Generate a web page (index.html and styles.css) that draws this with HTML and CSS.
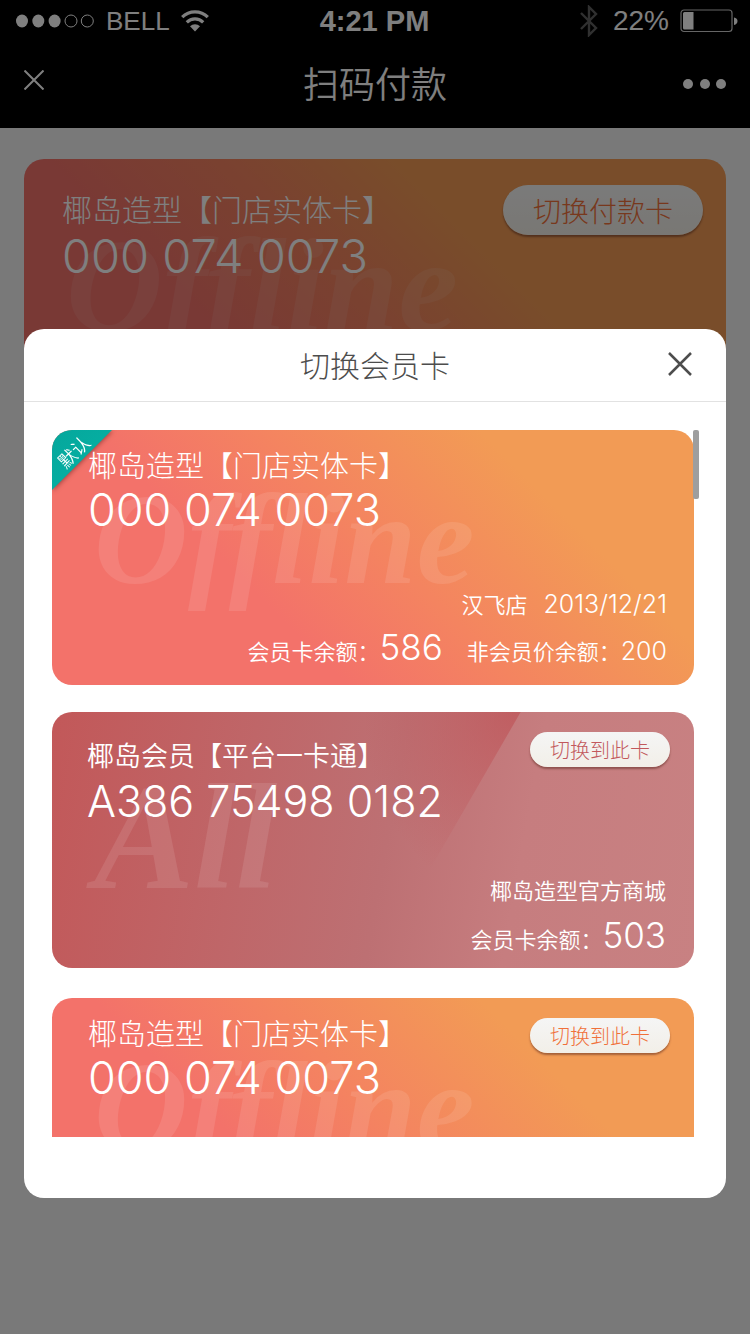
FILE: index.html
```
<!DOCTYPE html>
<html lang="zh-CN">
<head>
<meta charset="utf-8">
<meta name="viewport" content="width=device-width, initial-scale=1">
<title>扫码付款</title>
<link rel="stylesheet" href="styles.css">
</head>
<body>
<div class="page">
  <header class="topbar">
    <div class="status">
      <div class="status-side">
        <svg class="signal" width="80" height="14" viewBox="0 0 80 14" fill="#fff" aria-hidden="true">
          <ellipse cx="7" cy="7" rx="6" ry="6.5"/><ellipse cx="23.3" cy="7" rx="6" ry="6.5"/><ellipse cx="39.6" cy="7" rx="6" ry="6.5"/>
          <g fill="none" stroke="#fff"><circle cx="56" cy="7" r="6"/><circle cx="72.3" cy="7" r="6"/></g>
        </svg>
        <span class="carrier">BELL</span>
        <svg width="28" height="22" viewBox="0 0 28 22" aria-hidden="true">
          <g fill="none" stroke="#fff" stroke-width="3.2"><path d="M1.2 7.2a18 18 0 0 1 25.600 0"/><path d="M5.800 12.300a11.600 11.600 0 0 1 16.400 0"/></g>
          <path d="M14 21.500l-5-5.200a7.200 7.200 0 0 1 10 0z" fill="#fff"/>
        </svg>
      </div>
      <span class="time">4:21 PM</span>
      <div class="status-side status-right">
        <svg width="18" height="32" viewBox="0 0 18 32" fill="none" stroke="#606060" stroke-width="2.400" aria-hidden="true"><path d="M1 8l15 15-7 7V2l7 7L1 24"/></svg>
        <span class="percent">22%</span>
        <svg width="58" height="24" viewBox="0 0 58 24" aria-hidden="true">
          <rect x="1" y="1" width="51" height="21.500" rx="3" fill="none" stroke="#ccc" stroke-width="1.200"/>
          <path d="M4.500 3H13.500V20.500H4.500Q3 20.500 3 19V4.500Q3 3 4.500 3zM54 8.500Q57.500 9 57.500 12T54 16z" fill="#fff"/>
        </svg>
      </div>
    </div>
    <nav class="nav">
      <button class="nav-btn" aria-label="关闭"><svg width="20" height="20" viewBox="0 0 20 20" stroke="#fff" stroke-width="2"><path d="M.5.5l19 19M19.500.5l-19 19"/></svg></button>
      <h1 class="nav-title">扫码付款</h1>
      <button class="nav-btn nav-more" aria-label="更多"><svg width="44" height="12" viewBox="0 0 44 12" fill="#fff"><circle cx="6" cy="6" r="5"/><circle cx="23" cy="6" r="5"/><circle cx="39" cy="6" r="5"/></svg></button>
    </nav>
  </header>
  <main class="content">
    <section class="card card-offline card-current">
      <span class="watermark" aria-hidden="true">Offline</span>
      <div class="card-head">
        <div>
          <h2 class="card-title">椰岛造型【门店实体卡】</h2>
          <p class="card-number">000 074 0073</p>
        </div>
        <button class="pill">切换付款卡</button>
      </div>
    </section>
  </main>
</div>

<div class="overlay">
  <div class="dialog" role="dialog" aria-modal="true" aria-labelledby="dialog-title">
    <header class="dialog-head">
      <h2 class="dialog-title" id="dialog-title">切换会员卡</h2>
      <button class="dialog-close" aria-label="关闭"><svg width="24" height="24" viewBox="0 0 24 24" stroke="#4d4d4d" stroke-width="2.500"><path d="M1 1l22 22M23 1L1 23"/></svg></button>
    </header>
    <div class="list-wrap">
      <div class="list">
        <article class="card card-offline">
          <span class="watermark" aria-hidden="true">Offline</span>
          <div class="ribbon"><div class="ribbon-fill"><span class="ribbon-text">默认</span></div></div>
          <div class="card-head">
            <div>
              <h3 class="card-title">椰岛造型【门店实体卡】</h3>
              <p class="card-number">000 074 0073</p>
            </div>
          </div>
          <div class="card-foot">
            <p class="foot-row"><span>汉飞店</span><span class="date">2013/12/21</span></p>
            <p class="foot-row foot-balance"><span>会员卡余额：<span class="amount">586</span></span><span>非会员价余额：<span class="amount-small">200</span></span></p>
          </div>
        </article>
        <article class="card card-all">
          <span class="watermark" aria-hidden="true">All</span>
          <div class="card-head">
            <div>
              <h3 class="card-title">椰岛会员【平台一卡通】</h3>
              <p class="card-number">A386 75498 0182</p>
            </div>
            <button class="pill">切换到此卡</button>
          </div>
          <div class="card-foot">
            <p class="foot-row">椰岛造型官方商城</p>
            <p class="foot-row foot-balance"><span>会员卡余额：<span class="amount">503</span></span></p>
          </div>
        </article>
        <article class="card card-offline">
          <span class="watermark" aria-hidden="true">Offline</span>
          <div class="card-head">
            <div>
              <h3 class="card-title">椰岛造型【门店实体卡】</h3>
              <p class="card-number">000 074 0073</p>
            </div>
            <button class="pill">切换到此卡</button>
          </div>
        </article>
      </div>
      <div class="scroll-thumb"></div>
    </div>
  </div>
</div>
</body>
</html>
```
FILE: styles.css
```
* { box-sizing: border-box; }

body {
  margin: 0;
  background: #f3f3f3;
  font-family: "Noto Sans CJK SC", sans-serif;
  font-weight: 300;
}

h1, h2, h3, p { margin: 0; font-weight: inherit; }

button {
  padding: 0;
  border: 0;
  background: none;
  font: inherit;
  cursor: pointer;
}

svg { display: block; flex: none; }

.page { min-height: 100vh; }

/* Top bar */
.topbar { height: 128px; background: #000; color: #fff; }

.status {
  display: grid;
  grid-template-columns: 1fr auto 1fr;
  align-items: center;
  height: 42px;
  padding: 0 12px 0 15px;
  font-family: "Liberation Sans", sans-serif;
  font-weight: 400;
}
.status-side { display: flex; align-items: center; gap: 11px; }
.status-right { justify-content: flex-end; }
.carrier { font-size: 26px; line-height: 42px; }
.time { padding-right: 4px; font-size: 29px; font-weight: 700; line-height: 42px; }
.percent { margin-left: 4px; font-size: 28px; line-height: 42px; }

.nav {
  display: grid;
  grid-template-columns: 1fr auto 1fr;
  align-items: center;
  height: 84px;
  padding: 0 24px;
}
.nav-btn { justify-self: start; padding-bottom: 8px; }
.nav-more { justify-self: end; padding-bottom: 0; }
.nav-title { padding-bottom: 4px; font-size: 36px; font-weight: 350; line-height: 52px; }

.content { padding: 31px 24px; }

/* Cards */
.card {
  position: relative;
  display: flex;
  flex-direction: column;
  flex: none;
  justify-content: space-between;
  height: 255px;
  padding: 17px 24px 10px 36px;
  border-radius: 20px;
  overflow: hidden;
  color: #fff;
}
.card-offline {
  background: linear-gradient(45deg, #f3726a 33%, #f48460 52%, #f29b55 76%);
}
.card-all {
  height: 256px;
  padding-bottom: 6px;
  padding-left: 35px;
  background: linear-gradient(100deg, #c25859 0%, #bd7073 52%, #c67d7f 72%, #c88182 100%);
}
.card-all::before {
  content: "";
  position: absolute;
  inset: 0;
  clip-path: polygon(0 0, 73% 0, 50% 100%, 0 100%);
  background: radial-gradient(ellipse 150px 190px at 72% 0, rgba(190, 80, 84, .65), rgba(190, 80, 84, 0));
}
.card-head, .card-foot { position: relative; }
.card-head {
  display: flex;
  justify-content: space-between;
  align-items: flex-start;
}
.card-title { font-size: 29px; line-height: 34px; }
.card-number {
  padding-top: 3px;
  font-family: Inter, sans-serif;
  font-size: 45px;
  line-height: 52px;
}
.card-all .card-title { padding-top: 9px; font-size: 27px; font-weight: 350; }
.card-all .card-number { font-size: 43px; }

.card-current {
  height: 400px;
  padding: 26px 23px 20px 38px;
  background: linear-gradient(45deg, #f3726a 38%, #f48460 55%, #f29b55 70%);
}
.card-current .card-title { padding-top: 6px; font-size: 30px; }
.card-current .card-number { padding-top: 5px; font-size: 47px; }

.watermark {
  position: absolute;
  top: 44px;
  left: 42px;
  font-family: "Brush Script MT", "Liberation Serif", serif;
  font-size: 130px;
  font-style: italic;
  font-weight: 700;
  line-height: 1;
  color: rgba(255, 255, 255, .1);
}
.card-all .watermark { top: 50px; font-size: 150px; }
.card-current .watermark { top: 60px; font-size: 134px; }

.pill {
  width: 140px;
  height: 35px;
  margin-top: 3px;
  border-radius: 18px;
  background: linear-gradient(#f5f5f5, #f2efe8);
  box-shadow: 0 2px 2px rgba(90, 40, 30, .5);
  font-size: 20px;
  line-height: 35px;
  color: #f0703a;
}
.card-all .pill { color: #c2585c; }
.card-current .pill {
  width: 200px;
  height: 50px;
  margin-top: 0;
  border-radius: 25px;
  font-size: 28px;
  line-height: 50px;
}

.card-foot {
  display: grid;
  justify-items: end;
  padding-right: 3px;
  font-size: 22px;
  font-weight: 350;
}
.foot-row { display: flex; align-items: baseline; gap: 16px; line-height: 34px; }
.foot-balance { gap: 24px; margin-top: 2px; line-height: 48px; }
.card-all .foot-row { padding-right: 1px; }
.card-all .foot-balance { margin-top: 5px; }
.date, .amount, .amount-small { font-family: Inter, sans-serif; font-weight: 300; }
.date { font-size: 25px; }
.amount { font-size: 35px; }
.amount-small { font-size: 25px; }

/* Corner mark of the default card */
.ribbon {
  position: absolute;
  top: 0;
  left: 0;
  filter: drop-shadow(1px 1px 2px rgba(90, 30, 30, .5));
}
.ribbon-fill {
  display: grid;
  place-items: center;
  width: 60px;
  height: 60px;
  padding: 0 18px 18px 0;
  background: linear-gradient(135deg, #06a79c, #04b3a5);
  clip-path: polygon(0 0, 100% 0, 0 100%);
}
.ribbon-text {
  font-size: 18px;
  font-weight: 350;
  line-height: 20px;
  white-space: nowrap;
  transform: rotate(-45deg);
}

/* Dialog */
.overlay {
  position: fixed;
  inset: 0;
  padding: 329px 24px 24px;
  background: rgba(0, 0, 0, .5);
  overflow: hidden;
}
.dialog {
  padding-bottom: 61px;
  border-radius: 20px;
  background: #fff;
}
.dialog-head {
  display: grid;
  grid-template-columns: 1fr auto 1fr;
  align-items: center;
  height: 73px;
  padding: 0 34px 2px;
  border-bottom: 1px solid #e2e2e2;
  color: #4d4d4d;
}
.dialog-title { grid-column: 2; font-size: 30px; line-height: 44px; }
.dialog-close { justify-self: end; }

.list-wrap { position: relative; padding: 28px 32px 0 28px; }
.list {
  display: flex;
  flex-direction: column;
  gap: 27px;
  height: 707px;
  overflow: hidden;
}
.list .card-all { margin-bottom: 3px; }
.scroll-thumb {
  position: absolute;
  top: 28px;
  right: 27px;
  width: 6px;
  height: 69px;
  border-radius: 2px;
  background: #9e9e9e;
}
```
